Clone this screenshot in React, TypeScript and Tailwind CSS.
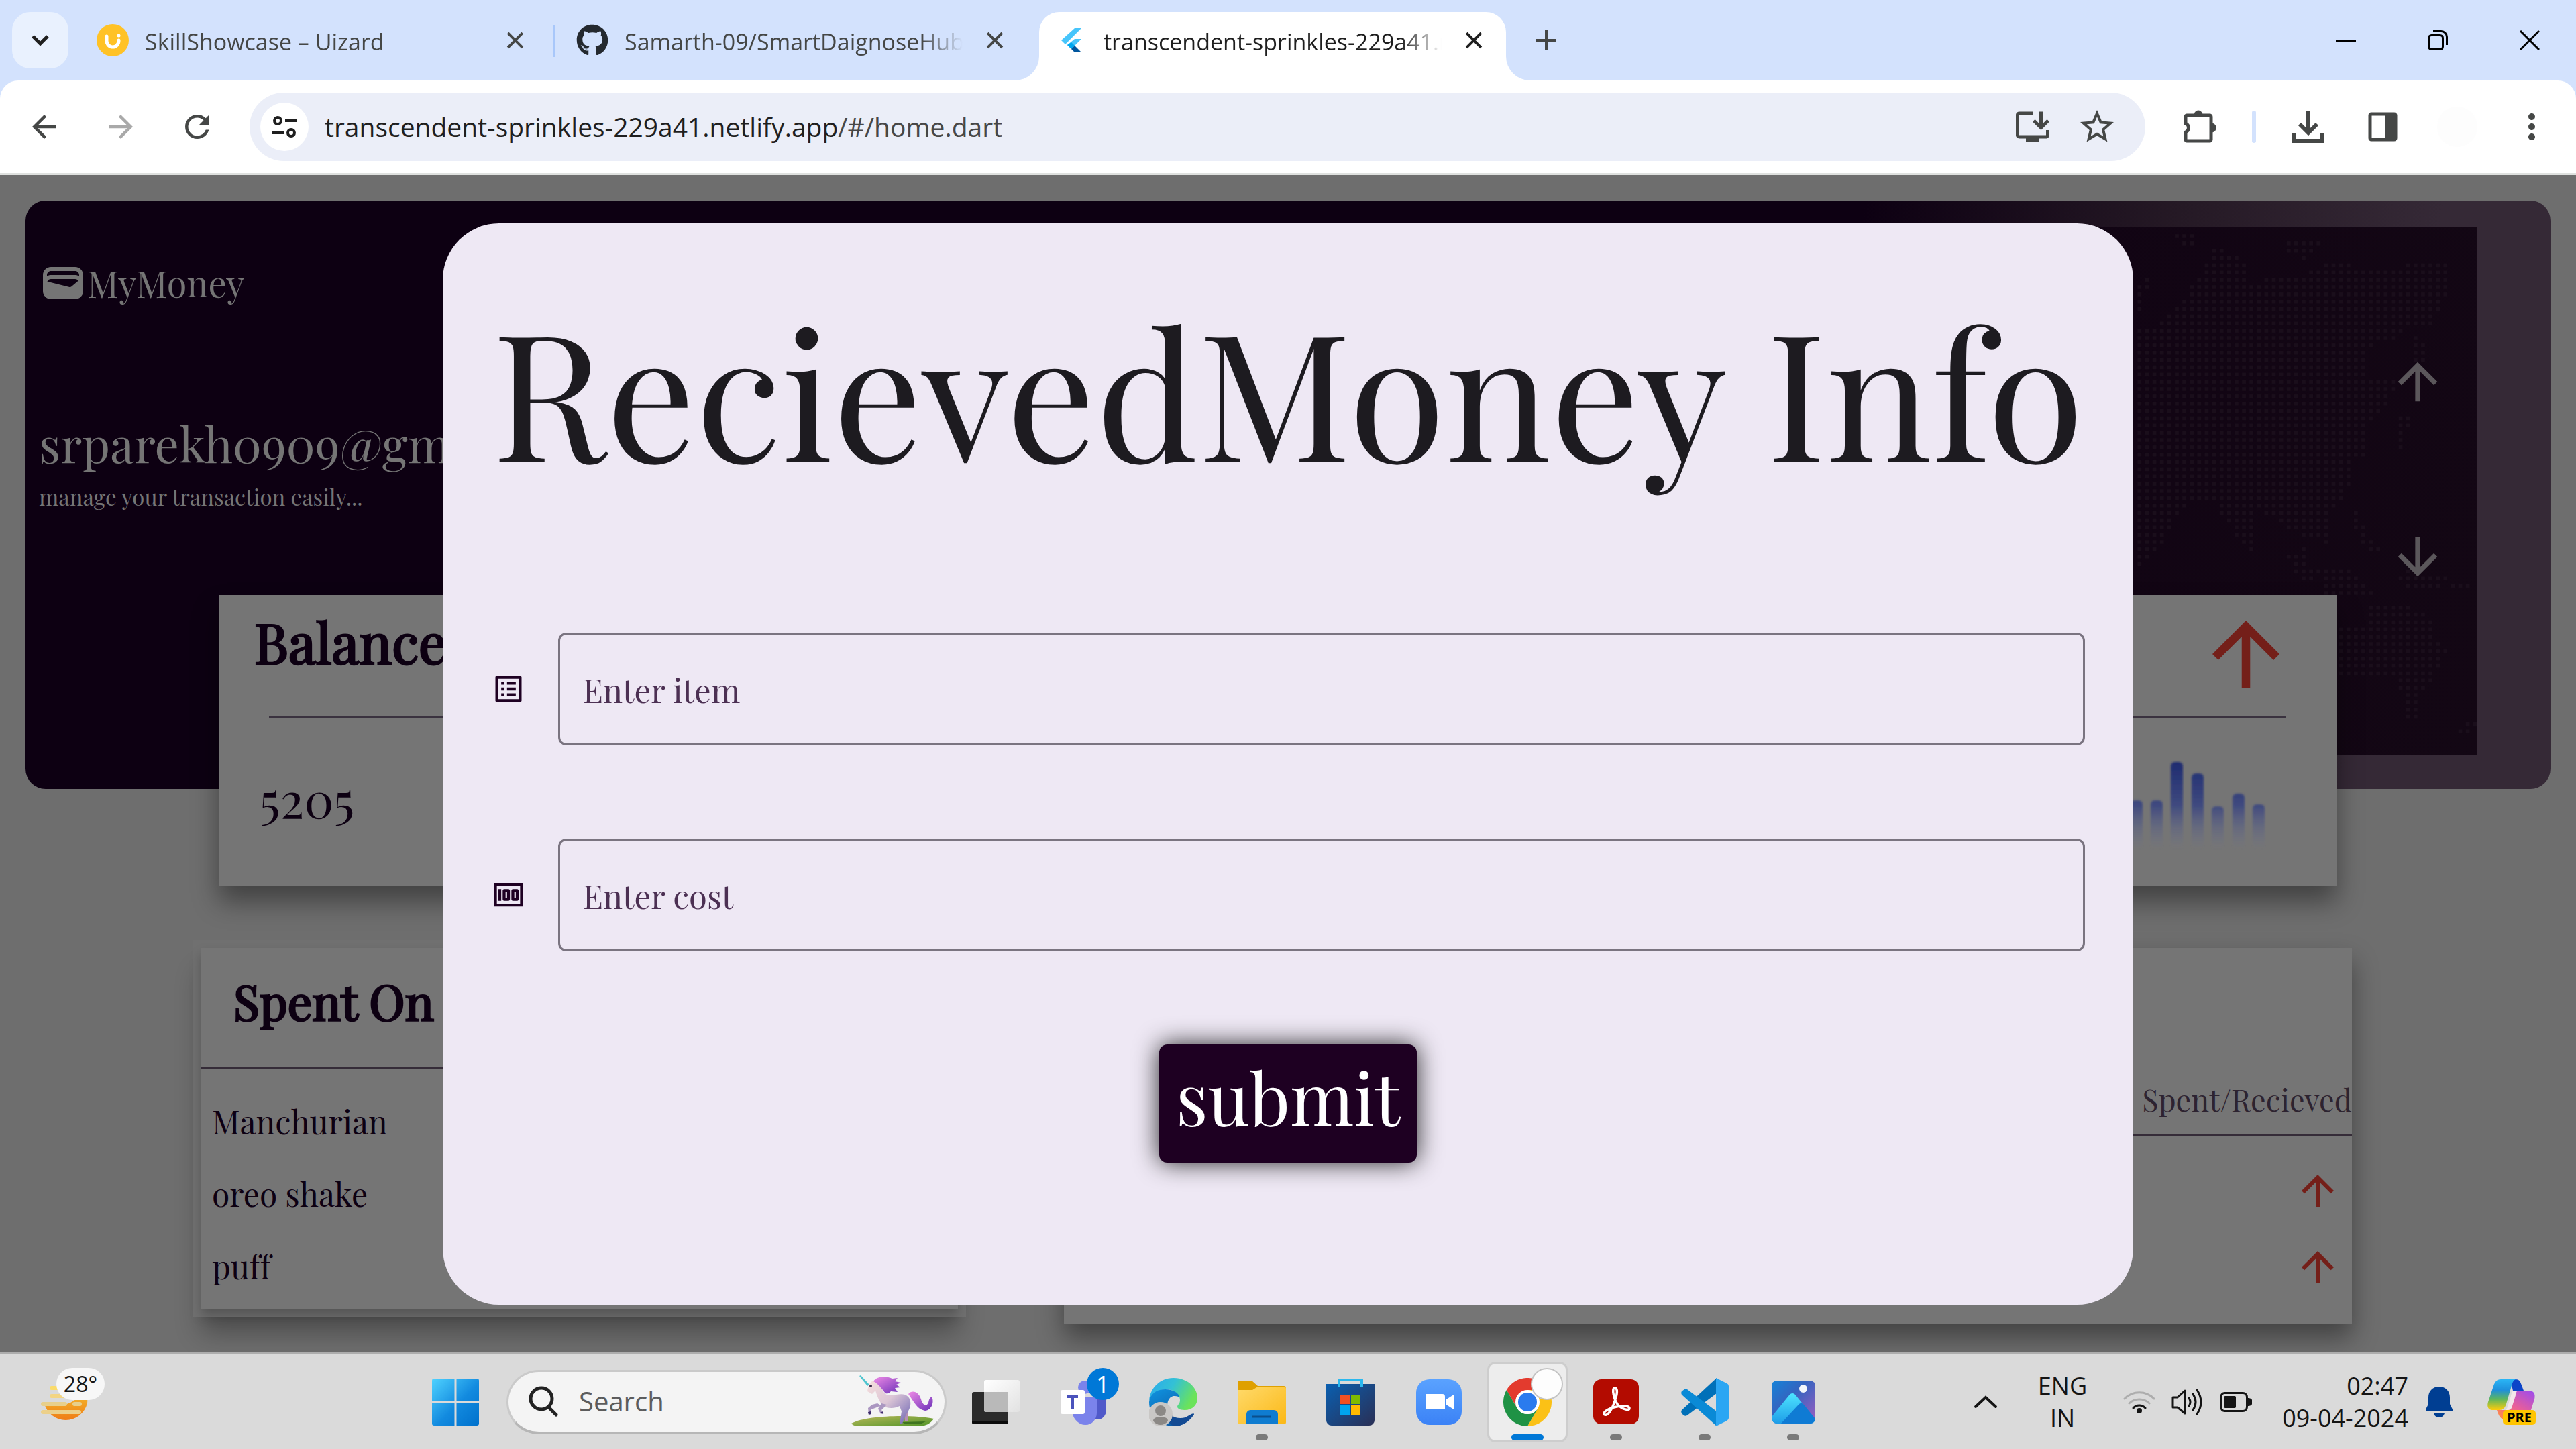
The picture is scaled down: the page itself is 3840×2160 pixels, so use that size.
import React from "react";
import {
  MdArrowBack,
  MdArrowForward,
  MdArrowUpward,
  MdArrowDownward,
  MdRefresh,
  MdStarBorder,
  MdOutlineInstallDesktop,
  MdOutlineListAlt,
  MdMoney,
  MdMoreVert,
  MdWallet,
} from "react-icons/md";
import { FaGithub } from "react-icons/fa";

const SANS = "font-['Open_Sans','Noto_Sans',sans-serif]";
const SERIF = "font-['Playfair_Display','Liberation_Serif',serif] [font-variant-ligatures:none]";

/* ---------- browser icons ---------- */

function CloseGlyph({ className }: { className: string }) {
  return (
    <svg viewBox="0 0 24 24" className={className} fill="none" stroke="currentColor" strokeWidth="3.6">
      <path d="M2 2l20 20M22 2L2 22" />
    </svg>
  );
}

function UizardIcon() {
  return (
    <svg viewBox="0 0 48 48" className="size-12 shrink-0">
      <circle cx="24" cy="24" r="24" fill="#ffc226" />
      <path d="M15 18v7a9 9 0 0 0 18 0v-1" fill="none" stroke="#fff" strokeWidth="5" strokeLinecap="round" />
      <circle cx="33" cy="17" r="2.5" fill="#fff" />
    </svg>
  );
}

function FlutterIcon() {
  return (
    <svg viewBox="0 0 48 48" className="size-12 shrink-0">
      <path d="M29 6h10L15 30l-6-6z" fill="#47c5fb" />
      <path d="M29 22h10L24 37l-6-6z" fill="#47c5fb" />
      <path d="M24 27l5 5-5 5-6-6z" fill="#00a8f0" />
      <path d="M24 37l5-5 10 10H29z" fill="#00569e" />
    </svg>
  );
}

function Tab({
  icon,
  title,
  active,
}: {
  icon: React.ReactNode;
  title: string;
  active?: boolean;
}) {
  return (
    <div
      className={
        active
          ? "relative flex h-[102px] w-[696px] items-center gap-6 rounded-t-[30px] bg-white px-6 pb-[18px] text-[#1f1f1f]"
          : "relative flex h-[102px] w-[696px] items-center gap-6 px-6 pb-[18px] text-[#454746]"
      }
    >
      {active && (
        <>
          <svg viewBox="0 0 36 36" className="absolute bottom-0 -left-9 size-9">
            <path d="M36 0v36H0A36 36 0 0 0 36 0z" fill="#fff" />
          </svg>
          <svg viewBox="0 0 36 36" className="absolute -right-9 bottom-0 size-9">
            <path d="M0 0v36h36A36 36 0 0 1 0 0z" fill="#fff" />
          </svg>
        </>
      )}
      {icon}
      <span className="min-w-0 flex-1 overflow-hidden pt-[3px] whitespace-nowrap text-[34px] leading-[48px] [mask-image:linear-gradient(to_right,black_88%,transparent)]">
        {title}
      </span>
      <button aria-label={"Close " + title} className="flex size-12 items-center justify-center">
        <CloseGlyph className="size-[26px]" />
      </button>
    </div>
  );
}

function Browser() {
  return (
    <header className={"bg-[#d3e2fd] " + SANS}>
      <div className="flex h-[120px] items-start pt-[18px] pl-[18px]">
        <button aria-label="Search tabs" className="flex size-[84px] items-center justify-center rounded-[27px] bg-[#e9f1fe]">
          <svg viewBox="0 0 26 16" className="h-4 w-[26px]" fill="none" stroke="#1f1f1f" strokeWidth="5">
            <path d="M2 2l11 11L24 2" />
          </svg>
        </button>
        <div className="ml-[18px] flex">
          <Tab icon={<UizardIcon />} title="SkillShowcase – Uizard" />
          <span className="mx-[8px] mt-[19px] h-12 w-[3px] bg-[#a8c7fa]" />
          <Tab icon={<FaGithub className="size-12 shrink-0 text-[#24292f]" />} title="Samarth-09/SmartDaignoseHub" />
          <span className="w-[18px]" />
          <Tab active icon={<FlutterIcon />} title="transcendent-sprinkles-229a41.netlify.app" />
        </div>
        <button aria-label="New tab" className="ml-9 flex h-[84px] w-12 items-center justify-center text-[#454746]">
          <svg viewBox="0 0 30 30" className="size-[30px]" stroke="currentColor" strokeWidth="4">
            <path d="M15 0v30M0 15h30" />
          </svg>
        </button>
        <div className="ml-auto flex pr-[1px] text-black">
          <button aria-label="Minimize" className="flex h-[84px] w-[137px] items-center justify-center">
            <span className="h-[3px] w-[30px] bg-black" />
          </button>
          <button aria-label="Restore" className="flex h-[84px] w-[137px] items-center justify-center">
            <svg viewBox="0 0 30 30" className="size-[30px]" fill="none" stroke="currentColor" strokeWidth="3">
              <rect x="1.5" y="7.5" width="21" height="21" rx="4" />
              <path d="M8 1.5h12a8.5 8.5 0 0 1 8.5 8.5v12" />
            </svg>
          </button>
          <button aria-label="Close window" className="flex h-[84px] w-[137px] items-center justify-center">
            <svg viewBox="0 0 30 30" className="size-[30px]" stroke="currentColor" strokeWidth="3">
              <path d="M1 1l28 28M29 1L1 29" />
            </svg>
          </button>
        </div>
      </div>

      <div className="flex h-[141px] items-center gap-[51px] rounded-t-[27px] border-b-[3px] border-[#dfe1df] bg-white pr-9 pl-[39px] text-[#454746]">
        <div className="flex gap-[60px]">
          <button aria-label="Back">
            <MdArrowBack className="size-[54px]" />
          </button>
          <button aria-label="Forward" className="text-[#a9a9a9]">
            <MdArrowForward className="size-[54px]" />
          </button>
          <button aria-label="Reload">
            <MdRefresh className="size-[54px]" />
          </button>
        </div>
        <div className="flex h-[102px] flex-1 items-center rounded-full bg-[#ebeef8] pr-[42px] pl-4">
          <button aria-label="Site information" className="flex size-[72px] items-center justify-center rounded-full bg-white">
            <svg viewBox="0 0 36 36" className="size-9" fill="none" stroke="#1f1f1f" strokeWidth="4">
              <circle cx="8" cy="9" r="5" />
              <path d="M19 9h17M0 27h17" />
              <circle cx="28" cy="27" r="5" />
            </svg>
          </button>
          <div className="relative ml-6 flex-1">
            <p aria-hidden="true" className="text-[39px] leading-[60px] whitespace-nowrap text-[#1f1f1f]">
              transcendent-sprinkles-229a41.netlify.app<span className="text-[#474747]">/#/home.dart</span>
            </p>
            <input
              aria-label="Address"
              defaultValue="transcendent-sprinkles-229a41.netlify.app/#/home.dart"
              className="absolute inset-0 w-full text-[39px] opacity-0"
            />
          </div>
          <button aria-label="Install app">
            <MdOutlineInstallDesktop className="size-[60px]" />
          </button>
          <button aria-label="Bookmark" className="ml-9">
            <MdStarBorder className="size-[60px]" />
          </button>
        </div>
        <div className="flex items-center gap-12">
          <button aria-label="Extensions">
            <svg viewBox="0 0 60 60" className="size-[60px]">
              <path
                d="M11 13h34a2 2 0 0 1 2 2v34a2 2 0 0 1-2 2H11a2 2 0 0 1-2-2V38a7 7 0 0 0 0-13V15a2 2 0 0 1 2-2z"
                fill="none"
                stroke="currentColor"
                strokeWidth="5"
              />
              <path d="M22 12a6 6 0 0 1 12 0zM48 25a6 6 0 0 1 0 13z" fill="currentColor" stroke="currentColor" strokeWidth="1" />
            </svg>
          </button>
          <span className="h-12 w-[6px] rounded-full bg-[#d3e2fd]" />
          <button aria-label="Downloads">
            <svg viewBox="0 0 60 60" className="size-[60px]" fill="none" stroke="currentColor" strokeWidth="6">
              <path d="M30 6v33M17 26l13 13 13-13M9 39v12h42V39" />
            </svg>
          </button>
        </div>
        <button aria-label="Side panel">
          <svg viewBox="0 0 60 60" className="size-[60px]">
            <rect x="11" y="11" width="38" height="38" rx="2" fill="none" stroke="currentColor" strokeWidth="5" />
            <path d="M34 9h14v42H34z" fill="currentColor" />
          </svg>
        </button>
        <button aria-label="Profile" className="size-[60px] rounded-full bg-[#fdfdfd]" />
        <button aria-label="Menu">
          <MdMoreVert className="size-[60px]" />
        </button>
      </div>
    </header>
  );
}

/* ---------- dotted world map ---------- */

type Point = [number, number];

const LANDS: Point[][] = [
  [[95, 335], [180, 320], [260, 265], [330, 190], [350, 155], [440, 172], [470, 190], [485, 235], [550, 220], [630, 225], [700, 200], [760, 180], [860, 205], [960, 195], [1145, 185], [1145, 240], [1110, 290], [1090, 320], [1000, 330], [960, 355], [880, 365], [870, 430], [960, 440], [960, 465], [910, 515], [860, 530], [870, 600], [810, 600], [820, 660], [790, 690], [750, 720], [740, 790], [700, 780], [640, 765], [580, 740], [500, 710], [490, 805], [430, 770], [400, 740], [360, 700], [280, 700], [230, 725], [190, 785], [160, 810], [95, 835]],
  [[780, 965], [870, 960], [880, 920], [950, 905], [1040, 930], [1090, 950], [1110, 1000], [1150, 1005], [1110, 1055], [1060, 1095], [1030, 1165], [1000, 1165], [990, 1100], [950, 1065], [780, 1070]],
  [[600, 810], [660, 790], [690, 860], [640, 860]],
  [[700, 830], [810, 830], [900, 895], [720, 895]],
  [[820, 680], [840, 730], [915, 805], [880, 805], [825, 760]],
  [[960, 850], [1030, 840], [1140, 860], [1110, 890], [990, 880]],
  [[975, 515], [1015, 515], [990, 585], [970, 585]],
  [[1020, 340], [1070, 355], [1060, 400], [1030, 400]],
  [[225, 120], [290, 125], [290, 155], [230, 140]],
  [[600, 140], [720, 140], [670, 185], [600, 165]],
  [[90, 230], [145, 220], [130, 260], [90, 320]],
  [[1170, 1180], [1236, 1160], [1236, 1180], [1190, 1210]],
  [[1150, 870], [1230, 870], [1230, 885], [1150, 885]],
];

function inside(x: number, y: number, poly: Point[]) {
  let hit = false;
  for (let i = 0, j = poly.length - 1; i < poly.length; j = i++) {
    const [xi, yi] = poly[i];
    const [xj, yj] = poly[j];
    if (yi > y !== yj > y && x < ((xj - xi) * (y - yi)) / (yj - yi) + xi) hit = !hit;
  }
  return hit;
}

const MAP_DOTS: Point[] = [];
for (let row = 0; row < 71; row++) {
  for (let col = 0; col < 46; col++) {
    const x = 110 + col * 24.9;
    const y = 131 + row * 15.5;
    if (LANDS.some((land) => inside(x, y, land))) MAP_DOTS.push([x, y]);
  }
}

function WorldMap() {
  return (
    <svg viewBox="0 111 1236 1125" preserveAspectRatio="none" className="absolute inset-y-0 right-0 h-full w-[552px]">
      {MAP_DOTS.map(([x, y]) => (
        <rect key={x + "-" + y} x={x - 6} y={y - 4} width="13" height="8" fill="#1a0e1b" />
      ))}
    </svg>
  );
}

/* ---------- dashboard behind the dialog ---------- */

const BARS = [
  { x: 20, top: 70 },
  { x: 50, top: 50 },
  { x: 80, top: 64 },
  { x: 110, top: 64 },
  { x: 140, top: 7 },
  { x: 171, top: 24 },
  { x: 201, top: 73 },
  { x: 232, top: 54 },
  { x: 262, top: 70 },
];

function BarChart() {
  return (
    <svg viewBox="0 0 280 140" className="h-[140px] w-[280px]">
      <defs>
        <linearGradient id="bar" gradientUnits="userSpaceOnUse" x1="0" y1="5" x2="0" y2="138">
          <stop offset="0" stopColor="#1c2a70" />
          <stop offset="0.5" stopColor="#3c477f" stopOpacity="0.95" />
          <stop offset="1" stopColor="#6b7090" stopOpacity="0" />
        </linearGradient>
        <filter id="soft">
          <feGaussianBlur stdDeviation="1.5" />
        </filter>
      </defs>
      {BARS.map((b) => (
        <rect key={b.x} x={b.x - 9} y={b.top} width="18" height={138 - b.top} rx="6" fill="url(#bar)" filter="url(#soft)" />
      ))}
    </svg>
  );
}

function Dashboard() {
  return (
    <div className="absolute inset-0 overflow-hidden bg-[#6e6e6e] text-[#0d0012]">
      <section className="mx-[38px] mt-[38px] flex h-[877px] justify-between rounded-[30px] bg-[linear-gradient(100deg,#0d0012_70%,#251925_82%,#352936_92%)]">
        <div className="pt-[87px] pl-5 text-[#757575]">
          <div className="flex items-center">
            <MdWallet className="size-[72px]" />
            <span className="text-[54px] leading-[60px]">MyMoney</span>
          </div>
          <p className="mt-[166px] text-[72px] leading-none">srparekh0909@gmail.com</p>
          <p className="mt-6 text-[33px] leading-[40px]">manage your transaction easily...</p>
        </div>
        <div className="relative mt-[39px] mr-[110px] mb-[50px] flex w-[1200px] flex-col items-end gap-[173px] bg-[linear-gradient(100deg,#100213,#130714)] pt-[187px] pr-[44px] text-[#5b575b]">
          <WorldMap />
          <button aria-label="Add spent money" className="relative">
            <MdArrowUpward className="size-[88px]" />
          </button>
          <button aria-label="Add received money" className="relative">
            <MdArrowDownward className="size-[88px]" />
          </button>
        </div>
      </section>

      <section className="relative -mt-[289px] mr-[357px] ml-[326px] h-[433px] bg-[#757575] shadow-[0_24px_36px_rgba(0,0,0,0.4)]">
        <div className="flex items-start justify-between pt-[13px] pr-[60px] pl-[53px]">
          <h2 className="pt-[15px] text-[82px] leading-none font-normal [-webkit-text-stroke:3px_#0d0012]">Balance</h2>
          <MdArrowUpward className="size-[150px] text-[#741f19]" />
        </div>
        <hr className="mx-[75px] mt-[18px] border-t-[3px] border-[#3a323f]" />
        <div className="flex justify-between pt-[58px] pr-[98px] pl-[61px]">
          <p className="pt-6 text-[74px] leading-none">5205</p>
          <BarChart />
        </div>
      </section>

      <div className="mt-[93px] mr-[334px] ml-[300px] flex items-start gap-[158px]">
        <section className="h-[538px] w-[1128px] bg-[#757575] shadow-[0_10px_16px_rgba(0,0,0,0.25),0_0_0_12px_#707070,0_36px_36px_rgba(0,0,0,0.3)]">
          <h2 className="pt-[42px] pl-12 text-[72px] leading-none font-normal [-webkit-text-stroke:3px_#0d0012]">Spent On</h2>
          <hr className="mt-[63px] border-t-[3px] border-[#352c38]" />
          <ul className="mt-6 pl-4 text-[48px] leading-[108px]">
            <li>Manchurian</li>
            <li>oreo shake</li>
            <li>puff</li>
          </ul>
        </section>
        <section className="h-[561px] flex-1 bg-[#757575] shadow-[0_20px_36px_rgba(0,0,0,0.4)]">
          <table className="w-full text-right">
            <thead>
              <tr>
                <th scope="col" className="border-b-[3px] border-[#352c38] pt-[203px] pb-[30px] text-[45px] leading-none font-normal text-[#2d2330]">
                  Spent/Recieved
                </th>
              </tr>
            </thead>
            <tbody className="text-[#741f19]">
              <tr>
                <td className="pt-[45px] pr-[15px]">
                  <MdArrowUpward aria-label="Spent" className="ml-auto size-[72px]" />
                </td>
              </tr>
              <tr>
                <td className="pt-[42px] pr-[15px]">
                  <MdArrowUpward aria-label="Spent" className="ml-auto size-[72px]" />
                </td>
              </tr>
            </tbody>
          </table>
        </section>
      </div>
    </div>
  );
}

/* ---------- dialog ---------- */

function Field({ id, label, icon }: { id: string; label: string; icon: React.ReactNode }) {
  return (
    <div className="flex items-center gap-12">
      <label htmlFor={id} className="text-[#1e0022]">
        <span className="sr-only">{label}</span>
        {icon}
      </label>
      <input
        id={id}
        type="text"
        placeholder={label}
        className="h-[168px] min-w-0 flex-1 rounded-[12px] border-[3px] border-[#7a7480] bg-transparent px-[34px] text-[49px] text-[#1e0022] placeholder:text-[#4c3053] placeholder:opacity-100"
      />
    </div>
  );
}

function ReceivedDialog() {
  return (
    <form
      role="dialog"
      aria-labelledby="dialog-title"
      onSubmit={(e) => e.preventDefault()}
      className="absolute inset-x-[660px] top-[72px] flex flex-col rounded-[84px] bg-[#eee8f4] px-[72px] pt-[115px] pb-[212px]"
    >
      <h1 id="dialog-title" className="text-center text-[263px] leading-none whitespace-nowrap text-[#1d1b20]">
        RecievedMoney Info
      </h1>
      <div className="mt-[232px] flex flex-col gap-[139px]">
        <Field id="item" label="Enter item" icon={<MdOutlineListAlt className="size-[52px]" />} />
        <Field id="cost" label="Enter cost" icon={<MdMoney className="size-[52px]" />} />
      </div>
      <button
        type="submit"
        className="mt-[139px] h-[176px] w-[384px] self-center rounded-[12px] bg-[#1e0022] pb-6 text-[107px] leading-none text-white shadow-[0_0_36px_rgba(0,0,0,0.85)]"
      >
        submit
      </button>
    </form>
  );
}

/* ---------- taskbar ---------- */

function WeatherIcon() {
  return (
    <svg viewBox="0 0 72 72" className="size-[72px]">
      <defs>
        <linearGradient id="sun" x1="0" y1="0" x2="0" y2="1">
          <stop offset="0" stopColor="#f5c531" />
          <stop offset="1" stopColor="#ef7d17" />
        </linearGradient>
      </defs>
      <path d="M6 36a33 33 0 0 0 64 0c1-8-1-18-6-24-4 14-14 24-30 26-10 2-20 0-28-2z" fill="url(#sun)" />
      <g strokeLinecap="round" strokeWidth="6">
        <path d="M17 13h24" stroke="#fadb6a" />
        <path d="M17 25h24" stroke="#f3d583" />
        <path d="M4 37h33M51 37h8" stroke="#e7cf8c" />
        <path d="M4 49h54" stroke="#ecd08a" />
      </g>
    </svg>
  );
}

function StartIcon() {
  return (
    <svg viewBox="0 0 70 70" className="size-[70px]">
      <defs>
        <linearGradient id="win" gradientUnits="userSpaceOnUse" x1="0" y1="0" x2="70" y2="70">
          <stop offset="0" stopColor="#4fd2ff" />
          <stop offset="0.55" stopColor="#128adf" />
          <stop offset="1" stopColor="#0071cc" />
        </linearGradient>
      </defs>
      <path d="M3 0h30.5v33.5H0V3a3 3 0 0 1 3-3zM36.5 0H67a3 3 0 0 1 3 3v30.5H36.5zM0 36.5h33.5V70H3a3 3 0 0 1-3-3zM36.5 36.5H70V67a3 3 0 0 1-3 3H36.5z" fill="url(#win)" />
    </svg>
  );
}

function Unicorn() {
  return (
    <svg viewBox="0 0 126 78" className="h-[78px] w-[126px]">
      <defs>
        <linearGradient id="body" gradientUnits="userSpaceOnUse" x1="30" y1="10" x2="90" y2="70">
          <stop offset="0" stopColor="#f3dcdc" />
          <stop offset="0.45" stopColor="#dcc6d6" />
          <stop offset="1" stopColor="#6f66b4" />
        </linearGradient>
        <linearGradient id="mane" x1="0" y1="0" x2="1" y2="1">
          <stop offset="0" stopColor="#ef8be6" />
          <stop offset="1" stopColor="#6b30b8" />
        </linearGradient>
        <linearGradient id="hill" x1="0" y1="0" x2="1" y2="1">
          <stop offset="0" stopColor="#b9b85a" />
          <stop offset="1" stopColor="#4f9427" />
        </linearGradient>
      </defs>
      <path d="M1 72c20-12 90-14 123-7-5 7-12 11-22 11H14c-6 0-10-1-13-4z" fill="url(#hill)" />
      <path d="M76 70l36-1-8 4-24-1z" fill="#3f7420" />
      <path d="M86 28c6-7 16-3 19 8 2 8 8 12 11 5 1-4 1-7 5-9 4 8 0 20-10 21-12-2-16-13-25-25z" fill="url(#mane)" />
      <path d="M80 42l6 10-1 17h-4l-1-15-6-8z" fill="#b58fb4" />
      <path d="M33 8l7 1c6 8 8 18 14 20 10 3 18-3 27 0 8 3 10 12 7 20-2 6-6 9-7 14l-4 9h-4l3-18-3-8c-8 4-18 4-24 0-5-4-9-13-12-23l-5 5-7-4c1-8 4-13 8-16z" fill="url(#body)" />
      <path d="M40 42l-8 2-6 5 1 9 3-1 1-6 8-3 6-3zM46 42l-5 8 4 8 5-1-4-5 8-8z" fill="#ab97c1" />
      <path d="M26 55l4-1 1 4-4 1zM44 56l5-2 0 4z" fill="#3b2a6a" />
      <path d="M13 1l2-1 13 14-3 2z" fill="#4fc5cf" />
      <path d="M34 9c4-7 18-9 28-4l8-1-4 5 9 2-7 3 6 4-8 1 4 6-10-1c-2 2-4 4-8 3-5-6-10-14-18-18z" fill="url(#mane)" />
      <circle cx="30" cy="16" r="2" fill="#3b2a4a" />
    </svg>
  );
}

function TaskViewIcon() {
  return (
    <svg viewBox="0 0 72 72" className="size-[72px]">
      <defs>
        <linearGradient id="tv" x1="0" y1="0" x2="1" y2="1">
          <stop offset="0" stopColor="#fff" />
          <stop offset="1" stopColor="#e2e2e2" />
        </linearGradient>
      </defs>
      <rect x="0" y="21" width="54" height="48" rx="3" fill="#2b2b2b" />
      <path d="M0 65h54v1a3 3 0 0 1-3 3H3a3 3 0 0 1-3-3z" fill="#0b0b0b" />
      <rect x="18" y="3" width="53" height="48" rx="3" fill="url(#tv)" />
      <path d="M18 21h36v30H21a3 3 0 0 1-3-3z" fill="#b9b9b9" />
    </svg>
  );
}

function TeamsIcon() {
  return (
    <svg viewBox="0 0 72 72" className="size-[72px]">
      <circle cx="36" cy="14" r="10" fill="#7b83eb" />
      <path d="M44 28h24v20c0 8-6 14-12 14-4 0-8-2-12-6z" fill="#5059c9" />
      <path d="M18 28h36v24c0 10-7 18-17 18S20 62 18 54z" fill="#7b83eb" />
      <rect x="0" y="18" width="36" height="36" rx="3" fill="#fff" />
      <path d="M10 28h16M18 28v19" stroke="#4b53bc" strokeWidth="4" fill="none" />
    </svg>
  );
}

function EdgeIcon() {
  return (
    <svg viewBox="0 0 72 72" className="size-[72px]">
      <defs>
        <linearGradient id="e1" x1="0" y1="0" x2="1" y2="0.4">
          <stop offset="0" stopColor="#2ba8ef" />
          <stop offset="0.5" stopColor="#33c1d5" />
          <stop offset="1" stopColor="#6be35a" />
        </linearGradient>
        <linearGradient id="e2" x1="0" y1="0" x2="0.6" y2="1">
          <stop offset="0" stopColor="#1093e0" />
          <stop offset="1" stopColor="#0c59a4" />
        </linearGradient>
      </defs>
      <path d="M0 36C0 16 16 0 36 0c22 0 36 15 36 30 0 11-8 18-19 18-8 0-11-3-11-5 0-3 4-4 4-10 0-9-9-16-21-16C10 17 0 28 0 36z" fill="url(#e1)" />
      <path d="M0 36c1-12 11-19 24-19 12 0 21 6 21 12-3-2-6-2-9-2-7 2-9 9-9 15 0 16 16 22 28 18l9-5C58 67 48 72 37 72 16 72 0 57 0 36z" fill="url(#e2)" />
      <path d="M27 42c0 14 14 21 27 17l9-5c4-2 5 0 3 2-7 10-17 16-29 16-10-5-14-17-10-30z" fill="#134a93" />
      <circle cx="17" cy="54" r="18" fill="#c9c7c5" />
      <circle cx="17" cy="49" r="8" fill="#8b8885" />
      <path d="M6 64c0-8 22-8 22 0-5 8-17 8-22 0z" fill="#8b8885" />
    </svg>
  );
}

function FolderIcon() {
  return (
    <svg viewBox="0 0 72 72" className="size-[72px]">
      <defs>
        <linearGradient id="fo" x1="0" y1="0" x2="1" y2="1">
          <stop offset="0" stopColor="#ffda6b" />
          <stop offset="1" stopColor="#fbb816" />
        </linearGradient>
      </defs>
      <path d="M0 7a3 3 0 0 1 3-3h18l9 8h39a3 3 0 0 1 3 3v10H0z" fill="#dfa000" />
      <path d="M0 18h22l8-5h39a3 3 0 0 1 3 3v50a3 3 0 0 1-3 3H3a3 3 0 0 1-3-3z" fill="url(#fo)" />
      <path d="M13 69V54a6 6 0 0 1 6-6h35a6 6 0 0 1 6 6v15z" fill="#0f7cd0" />
      <path d="M22 58h28" stroke="#0b4f8c" strokeWidth="3" />
    </svg>
  );
}

function StoreIcon() {
  return (
    <svg viewBox="0 0 72 72" className="size-[72px]">
      <defs>
        <linearGradient id="st" x1="0" y1="0" x2="1" y2="1">
          <stop offset="0" stopColor="#0a5fb0" />
          <stop offset="1" stopColor="#2a2f55" />
        </linearGradient>
      </defs>
      <path d="M0 9h72v54a8 8 0 0 1-8 8H8a8 8 0 0 1-8-8z" fill="url(#st)" />
      <path d="M19 14V3h34v11" fill="none" stroke="#2bb8ee" strokeWidth="4" />
      <path d="M21 25h14v14H21z" fill="#f25022" />
      <path d="M37 25h14v14H37z" fill="#7fba00" />
      <path d="M21 41h14v14H21z" fill="#00a4ef" />
      <path d="M37 41h14v14H37z" fill="#ffb900" />
    </svg>
  );
}

function ZoomIcon() {
  return (
    <svg viewBox="0 0 72 72" className="size-[72px]">
      <defs>
        <linearGradient id="zo" x1="0" y1="0" x2="0" y2="1">
          <stop offset="0" stopColor="#5aa2ff" />
          <stop offset="1" stopColor="#3b82f6" />
        </linearGradient>
      </defs>
      <rect x="2" y="2" width="68" height="68" rx="20" fill="url(#zo)" />
      <path d="M16 24h25a4 4 0 0 1 4 4v19H20a4 4 0 0 1-4-4zM47 32l11-7v22l-11-7z" fill="#fff" />
    </svg>
  );
}

function ChromeIcon() {
  return (
    <svg viewBox="0 0 72 72" className="size-[72px]">
      <path d="M36 36L4.8 18A36 36 0 0 1 67.2 18z" fill="#e33b2e" />
      <path d="M36 18h31.2A36 36 0 0 1 36 72l15.6-27z" fill="#fbc116" />
      <path d="M4.8 18L20.4 45 36 36V18z" fill="#e33b2e" />
      <path d="M4.8 18A36 36 0 0 0 36 72l15.6-27a18 18 0 0 1-31.2 0z" fill="#1f9245" />
      <circle cx="36" cy="36" r="18" fill="#fff" />
      <circle cx="36" cy="36" r="14" fill="#2a7bee" />
    </svg>
  );
}

function AcrobatIcon() {
  return (
    <svg viewBox="0 0 72 72" className="size-[72px]">
      <rect x="2" y="2" width="68" height="67" rx="12" fill="#b30b00" />
      <path
        d="M34 15c5 0 4 9 0 20-4 12-10 22-15 20-5-3 6-10 18-12 13-3 20 0 19 3s-12 1-18-7c-5-7-9-24-4-24z"
        fill="none"
        stroke="#fff"
        strokeWidth="3.5"
      />
    </svg>
  );
}

function VsCodeIcon() {
  return (
    <svg viewBox="0 0 72 72" className="size-[72px]">
      <path d="M54 0L2 48c-1 2-1 3 0 5l3 3c2 1 3 1 5 0l44-33z" fill="#0070b8" />
      <path d="M54 72L2 25c-1-2-1-4 0-5l4-3c1-1 3-1 4 0l44 33z" fill="#0a8ad6" />
      <path d="M53 0l16 8a5 5 0 0 1 3 4v48a5 5 0 0 1-3 4l-16 8z" fill="#2ba6f3" />
    </svg>
  );
}

function PhotosIcon() {
  return (
    <svg viewBox="0 0 72 72" className="size-[72px]">
      <defs>
        <linearGradient id="ph" x1="0" y1="0" x2="1" y2="1">
          <stop offset="0" stopColor="#1583d8" />
          <stop offset="0.4" stopColor="#3464c0" />
          <stop offset="1" stopColor="#a05cc0" />
        </linearGradient>
        <linearGradient id="mt" x1="0" y1="0" x2="0" y2="1">
          <stop offset="0" stopColor="#4de4ff" />
          <stop offset="1" stopColor="#1e9de8" />
        </linearGradient>
      </defs>
      <rect x="4" y="4" width="65" height="64" rx="8" fill="url(#ph)" />
      <path d="M4 58l26-32c3-4 7-4 10 0l29 36a8 8 0 0 1-8 6H12a8 8 0 0 1-8-8z" fill="url(#mt)" />
      <path d="M18 68l26-28c3-3 5-3 8 0l17 21a8 8 0 0 1-8 7z" fill="#0f7bd4" />
      <circle cx="51" cy="16" r="6" fill="#f2f6fb" />
    </svg>
  );
}

function AppButton({
  label,
  children,
  running,
  active,
}: {
  label: string;
  children: React.ReactNode;
  running?: boolean;
  active?: boolean;
}) {
  return (
    <button
      aria-label={label}
      className={
        active
          ? "relative flex size-[120px] items-center justify-center rounded-[12px] border-[3px] border-[#cdcdcd] bg-[#ededed]"
          : "relative flex size-[120px] items-center justify-center"
      }
    >
      {children}
      {running && <span className="absolute bottom-[3px] left-[51px] h-[9px] w-[18px] rounded-full bg-[#7a7a7a]" />}
      {active && <span className="absolute bottom-0 left-[33px] h-[9px] w-12 rounded-full bg-[#0078d7]" />}
    </button>
  );
}

function WifiIcon() {
  return (
    <svg viewBox="0 0 48 36" className="h-9 w-12" fill="none" strokeWidth="3" strokeLinecap="round">
      <path d="M2 13a31 31 0 0 1 44 0M9 20a22 22 0 0 1 30 0" stroke="#adadad" />
      <path d="M15 27a12 12 0 0 1 18 0" stroke="#141414" />
      <circle cx="24" cy="31" r="4" fill="#141414" />
    </svg>
  );
}

function SpeakerIcon() {
  return (
    <svg viewBox="0 0 48 42" className="h-[42px] w-12" fill="none" stroke="#141414" strokeWidth="3" strokeLinecap="round" strokeLinejoin="round">
      <path d="M2 14h7L20 4v34L9 29H2zM26 15q4 6 0 12M32 9q8 12 0 24M38 3q12 18 0 36" />
    </svg>
  );
}

function BatteryIcon() {
  return (
    <svg viewBox="0 0 48 30" className="h-[30px] w-12">
      <rect x="1.5" y="1.5" width="39" height="27" rx="6" fill="none" stroke="#141414" strokeWidth="3" />
      <rect x="6" y="6" width="18" height="18" rx="2" fill="#141414" />
      <path d="M43 10a5 5 0 0 1 0 10z" fill="#141414" stroke="#141414" strokeWidth="2" />
    </svg>
  );
}

function CopilotIcon() {
  return (
    <svg viewBox="0 0 72 68" className="h-[68px] w-[72px]">
      <defs>
        <linearGradient id="c1" x1="0" y1="0" x2="0" y2="1">
          <stop offset="0" stopColor="#2ab5f5" />
          <stop offset="0.35" stopColor="#1e8fdc" />
          <stop offset="0.65" stopColor="#5fb75b" />
          <stop offset="1" stopColor="#ffcc0a" />
        </linearGradient>
        <linearGradient id="c2" x1="1" y1="0" x2="0.2" y2="1">
          <stop offset="0" stopColor="#9a4af0" />
          <stop offset="0.6" stopColor="#ea5f97" />
          <stop offset="1" stopColor="#ff8a4a" />
        </linearGradient>
      </defs>
      <path d="M34 0h8c5 0 7 3 9 9l3 8H38z" fill="#0c44c8" />
      <path d="M20 0h24c-6 0-7 6-9 13l-7 24c-2 6-5 9-10 9H8c-7 0-9-5-7-12l8-24c2-6 5-10 11-10z" fill="url(#c1)" />
      <path d="M44 17h18c7 0 10 5 8 13l-7 22c-2 6-5 8-10 8H26c-6 0-9-5-12-14h12c5 0 7-3 9-9l5-14c1-4 2-6 4-6z" fill="url(#c2)" />
      <path d="M45 17h-5c-3 0-4 4-5 8l-5 16c-1 3-2 5-4 5h5c4 0 5-3 6-6l5-16c1-4 1-6 3-7z" fill="#f3e6ea" />
    </svg>
  );
}

function Taskbar() {
  return (
    <footer className={"flex h-[144px] items-center border-t-[3px] border-[#adadad] bg-[#dadada] text-[#141414] " + SANS}>
      <div className="w-[644px] pl-[60px]">
        <button aria-label="Weather" className="relative block pt-1">
          <WeatherIcon />
          <span className="absolute -top-[13px] left-6 flex h-12 w-[72px] items-center justify-center rounded-full bg-[#f7f7f7] text-[32px]">
            28°
          </span>
        </button>
      </div>
      <button aria-label="Start">
        <StartIcon />
      </button>
      <label className="mr-[14px] ml-[41px] flex h-24 w-[656px] items-center rounded-full border-[3px] border-b-[4px] border-[#cacaca] border-b-[#b6b6b6] bg-[#f4f4f4] pr-[14px] pl-[30px]">
        <svg viewBox="0 0 44 46" className="h-[46px] w-11 shrink-0" fill="none" stroke="#222" strokeWidth="5" strokeLinecap="round">
          <circle cx="19" cy="19" r="16" />
          <path d="M30 32l11 11" />
        </svg>
        <span className="sr-only">Search</span>
        <input
          type="search"
          placeholder="Search"
          className="ml-[31px] min-w-0 flex-1 bg-transparent text-[40px] placeholder:text-[#5c5c5c] placeholder:opacity-100"
        />
        <Unicorn />
      </label>
      <nav className="flex gap-3">
        <AppButton label="Task view">
          <TaskViewIcon />
        </AppButton>
        <AppButton label="Teams">
          <TeamsIcon />
          <span className="absolute top-[9px] right-[9px] flex size-12 items-center justify-center rounded-full bg-[#0078d7] text-[34px] leading-none text-white">
            1
          </span>
        </AppButton>
        <AppButton label="Edge">
          <EdgeIcon />
        </AppButton>
        <AppButton label="File Explorer" running>
          <FolderIcon />
        </AppButton>
        <AppButton label="Microsoft Store">
          <StoreIcon />
        </AppButton>
        <AppButton label="Zoom">
          <ZoomIcon />
        </AppButton>
        <AppButton label="Chrome" active>
          <ChromeIcon />
          <span className="absolute top-[6px] right-[4px] size-12 rounded-full border-2 border-[#c4c4c4] bg-[#fdfdfd]" />
        </AppButton>
        <AppButton label="Acrobat" running>
          <AcrobatIcon />
        </AppButton>
        <AppButton label="Visual Studio Code" running>
          <VsCodeIcon />
        </AppButton>
        <AppButton label="Photos" running>
          <PhotosIcon />
        </AppButton>
      </nav>
      <div className="ml-auto flex items-center pr-[60px] text-[36px] leading-[48px]">
        <button aria-label="Show hidden icons">
          <svg viewBox="0 0 36 20" className="h-5 w-9" fill="none" stroke="#141414" strokeWidth="4" strokeLinecap="round">
            <path d="M3 17L18 3l15 14" />
          </svg>
        </button>
        <button className="ml-[60px] text-center">
          ENG
          <br />
          IN
        </button>
        <button aria-label="Network, volume and battery" className="ml-[54px] flex items-center gap-6">
          <WifiIcon />
          <SpeakerIcon />
          <BatteryIcon />
        </button>
        <button className="ml-[45px] text-right">
          02:47
          <br />
          09-04-2024
        </button>
        <button aria-label="Notifications" className="ml-[26px]">
          <svg viewBox="0 0 40 46" className="h-[46px] w-10" fill="#003e92">
            <path d="M20 0C10 0 4 7 4 16v10l-4 8v3h40v-3l-4-8V16C36 7 30 0 20 0zM12 40h16q-2 6-8 6t-8-6z" />
          </svg>
        </button>
        <button aria-label="Copilot" className="relative ml-[52px]">
          <CopilotIcon />
          <span className="absolute right-0 bottom-0 rounded-[5px] bg-[#ffc400] px-[6px] text-[20px] leading-[22px] font-bold text-black">
            PRE
          </span>
        </button>
      </div>
    </footer>
  );
}

export default function App() {
  return (
    <div className="flex h-screen flex-col overflow-hidden">
      <Browser />
      <main className={"relative min-h-0 flex-1 overflow-hidden " + SERIF}>
        <Dashboard />
        <ReceivedDialog />
      </main>
      <Taskbar />
    </div>
  );
}
